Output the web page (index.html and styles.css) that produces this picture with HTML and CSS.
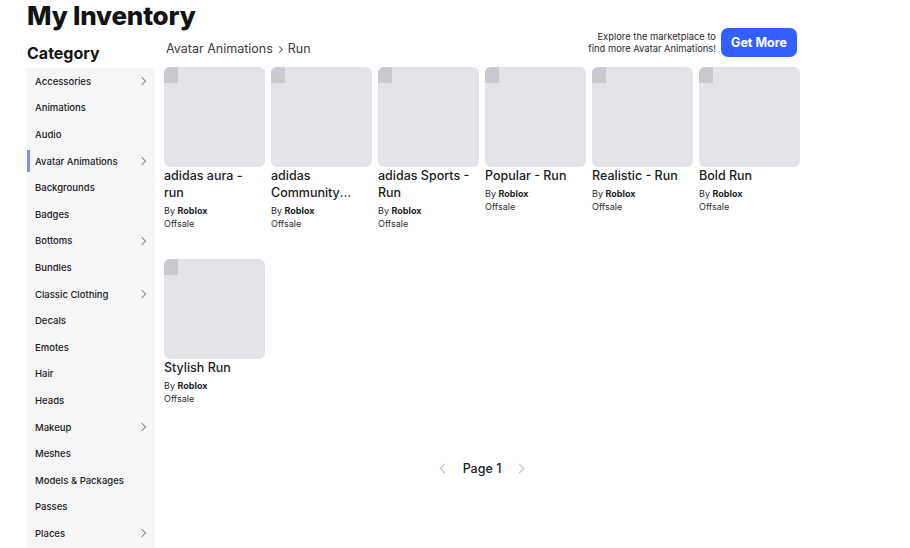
FILE: index.html
```html
<!DOCTYPE html>
<html lang="en">
<head>
<meta charset="utf-8">
<title>My Inventory</title>
<link rel="stylesheet" href="styles.css">
</head>
<body>
<div class="page">
  <h1 class="page-title">My Inventory</h1>
  <div class="layout">
    <aside class="sidebar">
      <h2 class="sidebar-title">Category</h2>
      <ul class="cat-list">
        <li class="cat has-sub">Accessories<span class="chev"></span></li>
        <li class="cat">Animations</li>
        <li class="cat">Audio</li>
        <li class="cat has-sub active">Avatar Animations<span class="chev"></span></li>
        <li class="cat">Backgrounds</li>
        <li class="cat">Badges</li>
        <li class="cat has-sub">Bottoms<span class="chev"></span></li>
        <li class="cat">Bundles</li>
        <li class="cat has-sub">Classic Clothing<span class="chev"></span></li>
        <li class="cat">Decals</li>
        <li class="cat">Emotes</li>
        <li class="cat">Hair</li>
        <li class="cat">Heads</li>
        <li class="cat has-sub">Makeup<span class="chev"></span></li>
        <li class="cat">Meshes</li>
        <li class="cat">Models &amp; Packages</li>
        <li class="cat">Passes</li>
        <li class="cat has-sub">Places<span class="chev"></span></li>
      </ul>
    </aside>
    <main class="main">
      <div class="main-head">
        <div class="crumbs">Avatar Animations<span class="crumb-sep"></span>Run</div>
        <div class="promo">
          <p class="promo-text">Explore the marketplace to<br>find more Avatar Animations!</p>
          <button class="btn-primary">Get More</button>
        </div>
      </div>
      <div class="grid">
        <div class="item"><div class="thumb"></div><div class="name">adidas aura - run</div><div class="creator">By <b>Roblox</b></div><div class="status">Offsale</div></div>
        <div class="item"><div class="thumb"></div><div class="name">adidas Community <span class="keep">- Run</span></div><div class="creator">By <b>Roblox</b></div><div class="status">Offsale</div></div>
        <div class="item"><div class="thumb"></div><div class="name">adidas Sports - Run</div><div class="creator">By <b>Roblox</b></div><div class="status">Offsale</div></div>
        <div class="item"><div class="thumb"></div><div class="name">Popular - Run</div><div class="creator">By <b>Roblox</b></div><div class="status">Offsale</div></div>
        <div class="item"><div class="thumb"></div><div class="name">Realistic - Run</div><div class="creator">By <b>Roblox</b></div><div class="status">Offsale</div></div>
        <div class="item"><div class="thumb"></div><div class="name">Bold Run</div><div class="creator">By <b>Roblox</b></div><div class="status">Offsale</div></div>
        <div class="item"><div class="thumb"></div><div class="name">Stylish Run</div><div class="creator">By <b>Roblox</b></div><div class="status">Offsale</div></div>
      </div>
      <div class="pager">
        <span class="pg-arrow prev"></span>
        <span class="pg-label">Page 1</span>
        <span class="pg-arrow next"></span>
      </div>
    </main>
  </div>
</div>
</body>
</html>
```

FILE: styles.css
```css
* { box-sizing: border-box; }

html, body {
  margin: 0;
  padding: 0;
  background: #fff;
  font-family: Inter, "Noto Sans", sans-serif;
  color: #1b1c1e;
}

.page {
  padding-left: 27px;
  width: 910px;
  height: 548px;
  overflow: hidden;
}

.page-title {
  margin: 0;
  font-size: 26px;
  font-weight: 800;
  line-height: 32px;
  letter-spacing: -0.2px;
  color: #121314;
}

.layout {
  display: flex;
  gap: 9px;
  margin-top: -4px;
}

/* left category column */
.sidebar {
  width: 128px;
  flex: none;
}

.sidebar-title {
  margin: 0;
  height: 40px;
  padding-top: 15px;
  font-size: 16px;
  font-weight: 700;
  line-height: 20px;
  color: #121314;
}

.cat-list {
  list-style: none;
  margin: 0;
  padding: 0 0 8px;
  background: #f6f6f7;
}

.cat {
  position: relative;
  height: 26.6px;
  display: flex;
  align-items: center;
  padding-left: 8px;
  font-size: 9.5px;
  font-weight: 500;
  color: #202124;
}

.cat.active::before {
  content: "";
  position: absolute;
  left: 0;
  top: 2px;
  bottom: 2px;
  width: 3px;
  background: #6e94ff;
}

.chev {
  position: absolute;
  right: 10px;
  top: 50%;
  width: 6px;
  height: 6px;
  margin-top: -3px;
  border-right: 1px solid #8a8c90;
  border-top: 1px solid #8a8c90;
  transform: rotate(45deg);
}

/* right content column */
.main {
  width: 636px;
  flex: none;
}

.main-head {
  height: 29px;
  margin-bottom: 10px;
  display: flex;
  justify-content: space-between;
  align-items: flex-end;
}

.crumbs {
  display: flex;
  align-items: center;
  padding-left: 2px;
  font-size: 12.5px;
  color: #393b3d;
  line-height: 16px;
}

.crumb-sep {
  display: inline-block;
  width: 5px;
  height: 5px;
  margin: 0 6px 0 4px;
  border-right: 1px solid #6a6c70;
  border-top: 1px solid #6a6c70;
  transform: rotate(45deg);
}

.promo {
  display: flex;
  align-items: center;
  gap: 5px;
  padding-right: 3px;
  height: 29px;
}

.promo-text {
  margin: 0;
  text-align: right;
  font-size: 9.4px;
  line-height: 12px;
  color: #2a2b2d;
}

.btn-primary {
  height: 29px;
  width: 76px;
  border: 0;
  border-radius: 7px;
  background: #335fff;
  color: #fff;
  font-family: inherit;
  font-size: 12.5px;
  font-weight: 700;
  padding: 0;
}

.grid {
  display: grid;
  grid-template-columns: repeat(6, 101px);
  column-gap: 6px;
  row-gap: 29px;
}

.thumb {
  position: relative;
  height: 100px;
  background: #e3e4e8;
  border-radius: 6px;
  overflow: hidden;
}

.thumb::before {
  content: "";
  position: absolute;
  left: 0;
  top: 0;
  width: 14px;
  height: 16px;
  background: #c9cad0;
}

/* item names wrap to at most two lines */
.name {
  font-size: 12.5px;
  font-weight: 500;
  line-height: 17px;
  max-height: 34px;
  color: #1b1c1e;
  display: -webkit-box;
  -webkit-line-clamp: 2;
  -webkit-box-orient: vertical;
  overflow: hidden;
}

.keep {
  white-space: nowrap;
}

.creator {
  margin-top: 3px;
}

.creator,
.status {
  font-size: 9px;
  line-height: 13px;
  color: #2c2d30;
}

.creator b {
  font-weight: 700;
  color: #1b1c1e;
}

.pager {
  margin-top: 56px;
  display: flex;
  justify-content: center;
  align-items: center;
  gap: 15px;
}

.pg-label {
  font-size: 12.5px;
  font-weight: 500;
  color: #1b1c1e;
}

.pg-arrow {
  width: 7px;
  height: 7px;
  border-right: 1px solid #b8babe;
  border-top: 1px solid #b8babe;
}

.pg-arrow.prev { transform: rotate(-135deg); }
.pg-arrow.next { transform: rotate(45deg); }
```
